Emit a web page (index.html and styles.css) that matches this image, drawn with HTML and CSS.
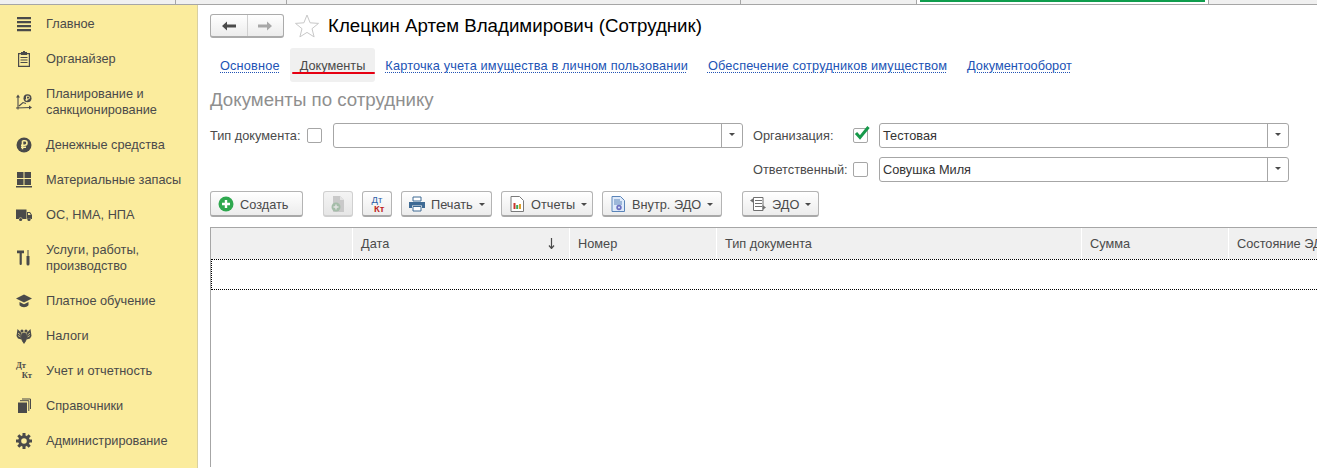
FILE: index.html
```html
<!DOCTYPE html>
<html lang="ru">
<head>
  <meta charset="UTF-8">
  <meta name="viewport" content="width=device-width, initial-scale=1.0">
  <title>Клецкин Артем Владимирович (Сотрудник)</title>
  <link rel="stylesheet" href="styles.css">
</head>
<body>
  <div class="open-tabs">
    <div class="open-tab tab-w1"></div>
    <div class="open-tab tab-w2"></div>
    <div class="open-tab tab-w3"></div>
    <div class="open-tab tab-w4"></div>
    <div class="open-tab tab-active"><div class="active-mark"></div></div>
    <div class="open-tab tab-rest"></div>
  </div>

  <div class="app">
    <nav class="sidebar">
      <a class="nav-item">
        <svg class="nav-icon" viewBox="0 0 16 16"><path d="M1 1h14v2.200H1zM1 5h14v2.200H1zM1 9h14v2.200H1zM1 13h14v2.200H1z"/></svg>
        <span>Главное</span>
      </a>
      <a class="nav-item">
        <svg class="nav-icon" viewBox="0 0 16 16"><path fill-rule="evenodd" d="M5 1h2V0h2v1h2v1h3v14H2V2h3zM3.200 3.200v11.600h9.600V3.200H11V4H5v-.8zM4.500 6h7v1h-7zM4.500 8.500h7v1h-7zM4.500 11h7v1h-7z"/></svg>
        <span>Органайзер</span>
      </a>
      <a class="nav-item nav-item-tall">
        <svg class="nav-icon" viewBox="0 0 16 16"><path d="M2 15.500V3M0 14l15-.5M3 12l4-3.500 3 1" fill="none" stroke="#4a4a4a" stroke-width="1.100"/><path d="M2 .5L4 3.500H0zM16 13.500l-3 2v-4z"/><circle cx="11.500" cy="4.200" r="4"/><path d="M10.500 2.200h1.700a1.300 1.300 0 010 2.800h-1.700M10.500 2.200v4.500M9.300 5.800h2.700" fill="none" stroke="#fbec9d"/></svg>
        <span>Планирование и<br>санкционирование</span>
      </a>
      <a class="nav-item">
        <svg class="nav-icon" viewBox="0 0 16 16"><circle cx="8" cy="8" r="7.500"/><path d="M6.500 3.800h2.300a2.200 2.200 0 010 4.400H6.500M6.500 3.800v8.500M5 8.200h1.500M5 10.300h5" fill="none" stroke="#fbec9d" stroke-width="1.600"/></svg>
        <span>Денежные средства</span>
      </a>
      <a class="nav-item">
        <svg class="nav-icon" viewBox="0 0 16 16"><path d="M1 0h6.500v6H1zM8.500 0H15v6H8.500zM1 7h6.500v6H1zM8.500 7H15v6H8.500zM0 14h16v1.500H0z"/></svg>
        <span>Материальные запасы</span>
      </a>
      <a class="nav-item">
        <svg class="nav-icon" viewBox="0 0 16 16"><path fill-rule="evenodd" d="M0 2.500h10.500V12H6.500a2 2 0 00-3.800 0H0zM11 5h3l2 3v4h-1.200a2 2 0 00-3.500 0H11zM12 6v2h2.800L13.500 6z"/><circle cx="4.600" cy="12.500" r="1.600"/><circle cx="13" cy="12.500" r="1.600"/></svg>
        <span>ОС, НМА, НПА</span>
      </a>
      <a class="nav-item nav-item-tall">
        <svg class="nav-icon" viewBox="0 0 16 16"><path d="M1 .5h7v2.800H5.800V14a1 1 0 01-2.200 0V3.300H1zM11.500 0h1v6h1v8a1.500 1.500 0 01-3 0V6h1z"/></svg>
        <span>Услуги, работы,<br>производство</span>
      </a>
      <a class="nav-item">
        <svg class="nav-icon" viewBox="0 0 16 16"><path d="M8 1.500L0 5.500l8 4 8-4zM3.500 9v3.200c1 1.300 2.800 2 4.500 2s3.500-.7 4.500-2V9L8 11.300z"/></svg>
        <span>Платное обучение</span>
      </a>
      <a class="nav-item">
        <svg class="nav-icon" viewBox="0 0 16 16"><path d="M5.500 5L1.500 1 .5 8l1.500 2.500 3.500 1zM10.500 5l4-4 1 7-1.500 2.500-3.500 1zM6 13h4l-2 3z"/><ellipse cx="8" cy="9" rx="3" ry="4.500"/><circle cx="6" cy="3" r="1.600"/><circle cx="10" cy="3" r="1.600"/><path d="M2 5l2.500 2M2 7.500l2.500 1.500M14 5l-2.500 2M14 7.500L11.500 9" stroke="#fbec9d" stroke-width=".7"/></svg>
        <span>Налоги</span>
      </a>
      <a class="nav-item">
        <span class="dt-kt"><b class="dt">Дт</b><b class="kt">Кт</b></span>
        <span>Учет и отчетность</span>
      </a>
      <a class="nav-item">
        <svg class="nav-icon" viewBox="0 0 16 16"><path d="M2 4.500h9V15H2z"/><path d="M4 2.700h8.800V13M6 1h8.500v10" fill="none" stroke="#4a4a4a"/></svg>
        <span>Справочники</span>
      </a>
      <a class="nav-item">
        <svg class="nav-icon" viewBox="0 0 16 16"><circle cx="8" cy="8" r="4.300" fill="none" stroke="#4a4a4a" stroke-width="3"/><path d="M8 0v3M8 13v3M0 8h3M13 8h3M2.300 2.300l2.100 2.100M11.600 11.600l2.100 2.100M2.300 13.700l2.100-2.100M11.600 4.400l2.100-2.100" stroke="#4a4a4a" stroke-width="3"/></svg>
        <span>Администрирование</span>
      </a>
    </nav>

    <main class="content">
      <header class="title-row">
        <div class="nav-arrows">
          <button class="arrow-btn">
            <svg viewBox="0 0 14 10" class="arrow-icon"><path d="M0 5l5-4.500V3.500h9v3H5v3z" fill="#4a4a4a"/></svg>
          </button>
          <button class="arrow-btn">
            <svg viewBox="0 0 14 10" class="arrow-icon"><path d="M14 5L9 .5V3.500H0v3h9v3z" fill="#a8a8a8"/></svg>
          </button>
        </div>
        <svg class="star" viewBox="0 0 24 24"><path d="M12 1l3.100 7.800 8.400.6-6.500 5.300 2.100 8.200L12 18.400 4.900 22.900 7 14.700.500 9.400l8.400-.6z" fill="#fff" stroke="#c8c8c8"/></svg>
        <h1 class="page-title">Клецкин Артем Владимирович (Сотрудник)</h1>
      </header>

      <div class="section-tabs">
        <a class="section-tab tab-spaced">Основное</a>
        <a class="section-tab section-tab-active">Документы<span class="red-underline"></span></a>
        <a class="section-tab tab-spaced">Карточка учета имущества в личном пользовании</a>
        <a class="section-tab tab-spaced">Обеспечение сотрудников имуществом</a>
        <a class="section-tab">Документооборот</a>
      </div>

      <h2 class="form-title">Документы по сотруднику</h2>

      <div class="filters">
        <div class="filter-left">
          <label class="field-label">Тип документа:</label>
          <span class="checkbox"></span>
          <div class="select"><div class="select-value"></div><div class="select-arrow"></div></div>
        </div>
        <div class="filter-right">
          <div class="filter-row">
            <label class="field-label label-wide">Организация:</label>
            <span class="checkbox">
              <svg class="check-mark" viewBox="0 0 16 14"><path d="M2 7l4 4.500L14.500 1" fill="none" stroke="#16994a" stroke-width="3"/></svg>
            </span>
            <div class="select"><div class="select-value">Тестовая</div><div class="select-arrow"></div></div>
          </div>
          <div class="filter-row">
            <label class="field-label label-wide">Ответственный:</label>
            <span class="checkbox"></span>
            <div class="select"><div class="select-value">Совушка Миля</div><div class="select-arrow"></div></div>
          </div>
        </div>
      </div>

      <div class="toolbar">
        <button class="btn btn-create">
          <svg class="btn-icon" viewBox="0 0 16 16"><circle cx="8" cy="8" r="7.500" fill="#2fa84f"/><path d="M8 4v8M4 8h8" stroke="#fff" stroke-width="2.400"/></svg>
          Создать
        </button>
        <button class="btn btn-square btn-disabled">
          <svg class="btn-icon" viewBox="0 0 16 16"><path d="M3 0h7l4 4v12H3z" fill="#c9c9c9"/><path d="M10 0l4 4h-4z" fill="#e4e4e4"/><circle cx="6" cy="11" r="4.500" fill="#a5bda9"/><path d="M6 8.500v5M3.500 11h5" stroke="#e3e3e3" stroke-width="1.400"/></svg>
        </button>
        <button class="btn btn-square">
          <span class="dt-kt dt-kt-color"><span class="dt">Дт</span><b class="kt">Кт</b></span>
        </button>
        <button class="btn btn-print">
          <svg class="btn-icon" viewBox="0 0 16 16"><path d="M4 1h8v4H4z" fill="#fff" stroke="#3e6a94"/><path d="M0 6h16v6h-3V9.500H3V12H0z" fill="#3e6a94"/><path d="M4 10.500h8V15H4z" fill="#fff" stroke="#3e6a94"/></svg>
          Печать
          <span class="caret"></span>
        </button>
        <button class="btn btn-report">
          <svg class="btn-icon" viewBox="0 0 14 16"><path d="M1 .5h8.500l4 4V15.500H1z" fill="#fff" stroke="#7a7a7a"/><path d="M3.500 7h2v6h-2z" fill="#c9372c"/><path d="M6.200 9h2v4h-2z" fill="#3aa655"/><path d="M9 8h2v5H9z" fill="#e0a030"/></svg>
          Отчеты
          <span class="caret"></span>
        </button>
        <button class="btn btn-inner">
          <svg class="btn-icon" viewBox="0 0 14 16"><path d="M1 .5h8.500l4 4V15.500H1z" fill="#dfeafa" stroke="#5a84b8"/><path d="M3 4h6M3 6h8M3 8h8" stroke="#5a84b8"/><circle cx="8" cy="11.500" r="2.700" fill="#6b6fc0"/><circle cx="8" cy="11.500" r="1" fill="#dfeafa"/></svg>
          Внутр. ЭДО
          <span class="caret"></span>
        </button>
        <button class="btn btn-edo">
          <svg class="btn-icon" viewBox="0 0 16 16"><path d="M3.500 1.500h9.500v13H3.500zM5 4.500h7M5 7.500h7M5 10.500h7" stroke="#707070" fill="#fff"/><path d="M0 4.500L3.500 2v5zM16 11.500L12.500 9v5z" fill="#707070"/></svg>
          ЭДО
          <span class="caret"></span>
        </button>
      </div>

      <div class="grid">
        <div class="grid-head">
          <div class="col col-mark"></div>
          <div class="col col-date">Дата
            <svg class="sort-arrow" viewBox="0 0 7 11"><path d="M3.500 0v10M1 7.500l2.500 3 2.500-3" fill="none" stroke="#4a4a4a" stroke-width="1.200"/></svg>
          </div>
          <div class="col col-num">Номер</div>
          <div class="col col-type">Тип документа</div>
          <div class="col col-sum">Сумма</div>
          <div class="col col-state">Состояние ЭДО</div>
        </div>
        <div class="grid-row"></div>
      </div>
    </main>
  </div>
</body>
</html>
```
FILE: styles.css
```css
* {
  box-sizing: border-box;
  margin: 0;
  padding: 0;
}

html, body {
  height: 100%;
  overflow: hidden;
}

body {
  display: flex;
  flex-direction: column;
  background-color: #ffffff;
  font-family: "Liberation Sans", Arial, sans-serif;
  font-size: 12.75px;
  color: #4a4a4a;
}

.open-tabs {
  display: flex;
  flex-shrink: 0;
  height: 5px;
  background-color: #f0f0f0;
  border-bottom: 1px solid #a6a6a6;
}

.open-tab {
  border-right: 1px solid #a6a6a6;
}

.tab-w1 { width: 176px; }
.tab-w2 { width: 111px; }
.tab-w3 { width: 454px; }
.tab-w4 { width: 176px; }

.tab-active {
  width: 292px;
  padding: 0 3px;
  background-color: #ffffff;
}

.active-mark {
  height: 2px;
  background-color: #0f9d4d;
}

.tab-rest {
  flex: 1;
  border-right: none;
}

.app {
  display: flex;
  flex: 1;
  min-height: 0;
}

.sidebar {
  display: flex;
  flex-direction: column;
  flex-shrink: 0;
  width: 198px;
  padding-top: 1px;
  background-color: #fbec9d;
  border-right: 1px solid #d9d0a0;
}

.nav-item {
  display: flex;
  align-items: center;
  gap: 14px;
  height: 35px;
  padding-left: 16px;
  line-height: 16px;
  color: #4a4a4a;
}

.nav-item-tall {
  height: 51px;
}

.nav-icon {
  flex-shrink: 0;
  width: 16px;
  height: 16px;
  fill: #4a4a4a;
}

.dt-kt {
  display: flex;
  flex-direction: column;
  flex-shrink: 0;
  width: 16px;
  font-family: "Liberation Serif", serif;
  font-size: 8.5px;
  line-height: 9.5px;
}

.kt {
  align-self: flex-end;
}

.dt-kt-color {
  width: 15px;
  font-family: "Liberation Sans", sans-serif;
  font-size: 9.5px;
  line-height: 9px;
}

.dt-kt-color .dt { color: #2f5fa8; }
.dt-kt-color .kt { color: #c0261e; }

.content {
  flex: 1;
  min-width: 0;
  padding: 8px 0 0 12px;
}

.title-row {
  display: flex;
  align-items: center;
  height: 26px;
}

.nav-arrows {
  display: flex;
  width: 74px;
  height: 24px;
  border: 1px solid #ababab;
  border-bottom-width: 2px;
  border-radius: 3px;
  background: linear-gradient(#ffffff, #ececec);
}

.arrow-btn {
  flex: 1;
  display: flex;
  align-items: center;
  justify-content: center;
  border: none;
  background: none;
}

.arrow-btn + .arrow-btn {
  border-left: 1px solid #d0d0d0;
}

.arrow-icon {
  width: 14px;
  height: 10px;
}

.star {
  width: 24px;
  height: 24px;
  margin-left: 11px;
}

.page-title {
  margin-left: 9px;
  font-size: 18.7px;
  font-weight: normal;
  color: #000000;
}

.section-tabs {
  display: flex;
  height: 34px;
  margin-top: 9px;
}

.section-tab {
  position: relative;
  display: flex;
  align-items: center;
  padding: 0 10px;
  color: #2153b5;
  text-decoration: underline dotted 1px;
  text-underline-offset: 2px;
}

.tab-spaced {
  letter-spacing: .15px;
}

.section-tab-active {
  background-color: #f0f0f0;
  border-radius: 3px;
  color: #4a4a4a;
  text-decoration: none;
}

.red-underline {
  position: absolute;
  left: 2px;
  right: 0;
  bottom: 8px;
  height: 2px;
  background-color: #e60012;
  border-radius: 1px;
}

.form-title {
  margin-top: 8px;
  font-size: 18.7px;
  font-weight: normal;
  line-height: 20px;
  color: #8f8f8f;
}

.filters {
  display: flex;
  margin-top: 13px;
}

.filter-left {
  display: flex;
  align-items: center;
  height: 25px;
}

.filter-right {
  display: flex;
  flex-direction: column;
  gap: 9px;
  margin-left: 10px;
}

.filter-row {
  display: flex;
  align-items: center;
  height: 25px;
}

.field-label {
  width: 90px;
  color: #4a4a4a;
  white-space: nowrap;
}

.label-wide {
  width: 93px;
}

.checkbox {
  position: relative;
  flex-shrink: 0;
  width: 15px;
  height: 15px;
  margin-left: 7px;
  border: 1px solid #a6a6a6;
  border-radius: 2px;
  background-color: #ffffff;
}

.check-mark {
  position: absolute;
  left: 0;
  top: -3px;
  width: 16px;
  height: 14px;
}

.select {
  display: flex;
  width: 410px;
  height: 25px;
  margin-left: 11px;
  border: 1px solid #a6a6a6;
  border-radius: 3px;
  background-color: #ffffff;
}

.select-value {
  flex: 1;
  padding-left: 3px;
  line-height: 23px;
  color: #333333;
}

.select-arrow {
  position: relative;
  width: 21px;
  border-left: 1px solid #a6a6a6;
}

.select-arrow::after {
  content: "";
  position: absolute;
  left: 7px;
  top: 9px;
  border-left: 3px solid transparent;
  border-right: 3px solid transparent;
  border-top: 3px solid #4a4a4a;
}

.toolbar {
  display: flex;
  margin-top: 9px;
  gap: 9px;
}

.btn {
  display: flex;
  align-items: center;
  gap: 6px;
  height: 26px;
  padding: 1px 7px 0;
  border: 1px solid #b4b4b4;
  border-bottom: 2px solid #a8a8a8;
  border-radius: 3px;
  background: linear-gradient(#ffffff, #ececec);
  font-family: inherit;
  font-size: inherit;
  color: #4a4a4a;
}

.btn-icon {
  width: 16px;
  height: 16px;
  flex-shrink: 0;
}

.btn-create {
  width: 93px;
  margin-right: 11px;
}

.btn-square {
  width: 30px;
  justify-content: center;
  padding: 0;
}

.btn-print { width: 91px; }
.btn-report { width: 92px; }
.btn-inner { width: 120px; }

.btn-disabled {
  background: linear-gradient(#f4f4f4, #e6e6e6);
  border-color: #d0d0d0;
}

.btn-edo {
  margin-left: 11px;
}

.caret {
  width: 0;
  height: 0;
  margin-top: 1px;
  border-left: 3px solid transparent;
  border-right: 3px solid transparent;
  border-top: 3px solid #4a4a4a;
}

.grid {
  height: 240px;
  margin-top: 10px;
  border-left: 1px solid #a6a6a6;
  border-top: 1px solid #a6a6a6;
}

.grid-head {
  display: flex;
  height: 31px;
  background-color: #f0f0f0;
}

.col {
  display: flex;
  align-items: center;
  flex-shrink: 0;
  padding: 0 8px;
  border-right: 1px solid #ffffff;
  white-space: nowrap;
}

.col-mark { width: 142px; }
.col-date { width: 217px; justify-content: space-between; }
.col-num { width: 147px; }
.col-type { width: 365px; }
.col-sum { width: 147px; }
.col-state { width: 100px; border-right: none; }

.sort-arrow {
  width: 7px;
  height: 11px;
  margin-right: 6px;
}

.grid-row {
  height: 31px;
  border-top: 1px dotted #000000;
  border-bottom: 1px dotted #000000;
  border-left: 1px dotted #000000;
}
```
